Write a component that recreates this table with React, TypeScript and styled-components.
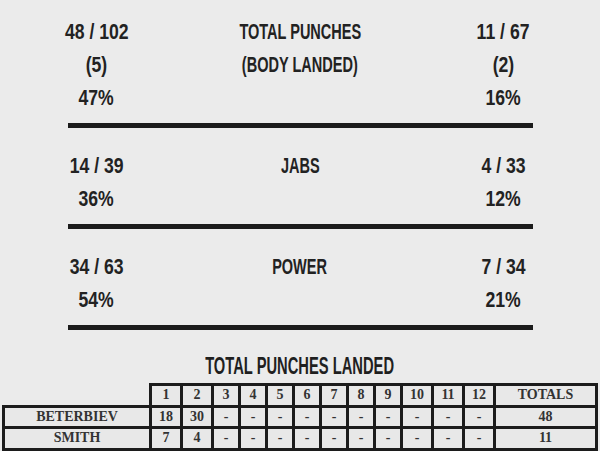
import React from 'react';
import styled, { createGlobalStyle } from 'styled-components';

const GlobalStyle = createGlobalStyle`
  html, body {
    margin: 0;
    padding: 0;
    background: #ebebeb;
  }
`;

const Page = styled.div`
  width: 600px;
  height: 451px;
  overflow: hidden;
  padding-top: 15px;
  box-sizing: border-box;
  background: #ebebeb;
`;

const StatBlock = styled.div`
  width: 465px;
  margin: 0 auto 21px;
  display: grid;
  grid-template-columns: 58px 1fr 58px;
  padding-bottom: 9px;
  border-bottom: 5px solid #1b1b1b;
`;

const Column = styled.div`
  display: flex;
  flex-direction: column;
  align-items: center;
`;

const Line = styled.div`
  height: 33px;
  line-height: 33px;
  font-family: 'Liberation Sans', Arial, sans-serif;
  font-weight: 700;
  font-size: 22px;
  color: #222;
  white-space: nowrap;
`;

const Squeezed = styled.span<{ $scale: number }>`
  display: inline-block;
  transform: scaleX(${p => p.$scale});
  transform-origin: center;
`;

const Title = styled.div`
  text-align: center;
  height: 30px;
  line-height: 30px;
  margin-bottom: 2px;
  font-family: 'Liberation Sans', Arial, sans-serif;
  font-weight: 700;
  font-size: 23px;
  color: #1f1f1f;
  white-space: nowrap;
`;

const Table = styled.table`
  margin-left: 2px;
  border-collapse: collapse;
  table-layout: fixed;
  width: 594px;
  font-family: 'Liberation Serif', 'Times New Roman', serif;
  font-weight: 700;
  font-size: 14px;
  color: #333;
`;

const Cell = styled.td<{ $blank?: boolean }>`
  height: 18.5px;
  padding: 0;
  text-align: center;
  line-height: 18px;
  background: ${p => (p.$blank ? 'transparent' : '#e8e8e8')};
  border: ${p => (p.$blank ? 'none' : '3px solid #1c1c1c')};
`;

interface Stat {
  left: string[];
  label: string[];
  right: string[];
}

const stats: Stat[] = [
  { left: ['48 / 102', '(5)', '47%'], label: ['TOTAL PUNCHES', '(BODY LANDED)'], right: ['11 / 67', '(2)', '16%'] },
  { left: ['14 / 39', '36%'], label: ['JABS'], right: ['4 / 33', '12%'] },
  { left: ['34 / 63', '54%'], label: ['POWER'], right: ['7 / 34', '21%'] },
];

const widths = [147, 31, 31, 27, 27, 27, 27, 27, 27, 27, 31, 31, 31, 102];
const rounds = ['1', '2', '3', '4', '5', '6', '7', '8', '9', '10', '11', '12'];

const fighters = [
  { name: 'BETERBIEV', rounds: ['18', '30'], total: '48' },
  { name: 'SMITH', rounds: ['7', '4'], total: '11' },
];

const App: React.FC = () => {
  return (
    <Page>
      <GlobalStyle />
      {stats.map((s, i) => (
        <StatBlock key={i}>
          <Column>
            {s.left.map(t => (
              <Line key={t}><Squeezed $scale={0.8}>{t}</Squeezed></Line>
            ))}
          </Column>
          <Column>
            {s.label.map(t => (
              <Line key={t}><Squeezed $scale={0.66}>{t}</Squeezed></Line>
            ))}
          </Column>
          <Column>
            {s.right.map(t => (
              <Line key={t}><Squeezed $scale={0.8}>{t}</Squeezed></Line>
            ))}
          </Column>
        </StatBlock>
      ))}

      <Title><Squeezed $scale={0.64}>TOTAL PUNCHES LANDED</Squeezed></Title>

      <Table>
        <colgroup>
          {widths.map((w, i) => (
            <col key={i} style={{ width: w }} />
          ))}
        </colgroup>
        <tbody>
          <tr>
            <Cell $blank />
            {rounds.map(r => (
              <Cell key={r}>{r}</Cell>
            ))}
            <Cell>TOTALS</Cell>
          </tr>
          {fighters.map(f => (
            <tr key={f.name}>
              <Cell>{f.name}</Cell>
              {rounds.map((r, i) => (
                <Cell key={r}>{f.rounds[i] ?? '-'}</Cell>
              ))}
              <Cell>{f.total}</Cell>
            </tr>
          ))}
        </tbody>
      </Table>
    </Page>
  );
};

export default App;
